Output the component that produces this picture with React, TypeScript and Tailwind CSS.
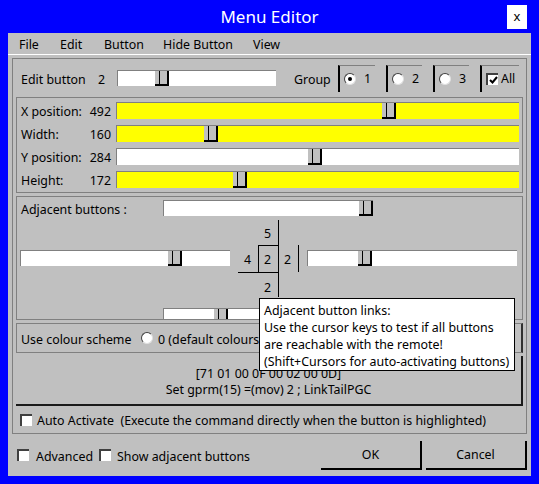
import React from 'react';

function Slider({ width, thumb, color = 'bg-white', className = '' }: { width: number; thumb: number; color?: string; className?: string }) {
  return (
    <div className={`relative h-[16px] shrink-0 border-t border-l border-[#808080] ${color} ${className}`} style={{ width }}>
      <div className="absolute top-0 bottom-0 w-[14px] bg-[#c0c0c0] border-r-2 border-b-2 border-black" style={{ left: thumb }}>
        <div className="absolute left-[4px] top-0 bottom-0 w-px bg-black" />
      </div>
    </div>
  );
}

function Radio({ checked = false }: { checked?: boolean }) {
  return (
    <div className="w-[12px] h-[12px] shrink-0 rounded-full bg-white border border-t-[#404040] border-l-[#404040] border-r-[#e0e0e0] border-b-[#e0e0e0] flex items-center justify-center">
      {checked && <div className="w-[4px] h-[4px] rounded-full bg-black" />}
    </div>
  );
}

function Check({ checked = false }: { checked?: boolean }) {
  return (
    <div className="w-[12px] h-[12px] shrink-0 bg-white border-t-2 border-l-2 border-[#404040] flex items-center justify-center">
      {checked && (
        <svg width="9" height="8" viewBox="0 0 9 8">
          <polyline points="1,4 3.5,6.5 8,1" fill="none" stroke="black" strokeWidth="2" />
        </svg>
      )}
    </div>
  );
}

function GroupFrame({ width, children }: { width: number; children: React.ReactNode }) {
  return (
    <div className="h-[27px] ml-[11px] first:ml-0 border-l-2 border-t border-l-black border-t-[#808080] flex items-center pl-[4px] gap-[8px]" style={{ width }}>
      {children}
    </div>
  );
}

const rows = [
  { label: 'X position:', value: 492, thumb: 265, color: 'bg-[#ffff00]' },
  { label: 'Width:', value: 160, thumb: 87, color: 'bg-[#ffff00]' },
  { label: 'Y position:', value: 284, thumb: 191, color: 'bg-white' },
  { label: 'Height:', value: 172, thumb: 116, color: 'bg-[#ffff00]' },
];

export default function App() {
  return (
    <div className="relative w-[539px] h-[484px] bg-[#0000ff] flex flex-col text-[12.4px] text-black font-['Noto_Sans',sans-serif] overflow-hidden">
      {/* Title bar */}
      <div className="h-[33px] shrink-0 flex items-center justify-center text-white text-[17px]">Menu Editor</div>
      <div className="absolute left-[507px] top-[5px] w-[20px] h-[24px] bg-white flex items-center justify-center text-[13px] text-black">x</div>

      {/* Window body */}
      <div className="mx-[8px] mb-[8px] flex-1 bg-[#c0c0c0] flex flex-col">
        {/* Menu */}
        <div className="h-[22px] shrink-0 flex items-center pt-[4px] border-b border-white">
          <span className="w-[41px] ml-[11px]">File</span>
          <span className="w-[44px]">Edit</span>
          <span className="w-[59px]">Button</span>
          <span className="w-[90px]">Hide Button</span>
          <span>View</span>
        </div>

        {/* Main frame */}
        <div className="mt-[3px] mx-[4px] h-[376px] border border-[#808080] flex flex-col">
          {/* Edit button row */}
          <div className="h-[38px] shrink-0 flex items-center pl-[8px]">
            <span className="w-[77px] relative top-[2px]">Edit button</span>
            <span className="w-[19px] relative top-[2px]">2</span>
            <Slider width={159} thumb={37} />
            <span className="ml-[18px] w-[44px] relative top-[2px]">Group</span>
            <div className="flex">
              <GroupFrame width={37}><Radio checked /><span className="relative top-[1px]">1</span></GroupFrame>
              <GroupFrame width={36}><Radio /><span className="relative top-[1px]">2</span></GroupFrame>
              <GroupFrame width={36}><Radio /><span className="relative top-[1px]">3</span></GroupFrame>
              <GroupFrame width={39}><Check checked /><span className="-ml-[5px] relative top-[1px]">All</span></GroupFrame>
            </div>
          </div>

          {/* Position group */}
          <div className="mx-[3px] h-[96px] shrink-0 border border-[#808080] pt-[4px] pl-[4px] pr-[3px] flex flex-col gap-[6px]">
            {rows.map((r) => (
              <div key={r.label} className="h-[17px] flex items-center">
                <span className="w-[68px] relative top-[2px]">{r.label}</span>
                <span className="w-[22px] text-right relative top-[2px]">{r.value}</span>
                <div className="ml-[5px] flex-1 relative h-[17px] border-t border-l border-[#808080]">
                  <div className={`absolute inset-0 ${r.color}`} />
                  <div className="absolute top-0 bottom-0 w-[14px] bg-[#c0c0c0] border-r-2 border-b-2 border-black" style={{ left: r.thumb }}>
                    <div className="absolute left-[4px] top-0 bottom-0 w-px bg-black" />
                  </div>
                </div>
              </div>
            ))}
          </div>

          {/* Adjacent buttons group */}
          <div className="mt-[3px] mx-[3px] h-[124px] shrink-0 border border-[#808080] overflow-hidden flex flex-col">
            <div className="mt-[3px] h-[16px] flex items-center pl-[4px]">
              <span className="w-[142px] relative top-[2px]">Adjacent buttons :</span>
              <Slider width={210} thumb={195} />
            </div>
            <div className="mt-[1px] h-[81px] flex items-center">
              <Slider width={210} thumb={147} className="ml-[3px]" />
              <div className="relative w-[77px] h-[81px] shrink-0">
                <div className="absolute left-[48px] top-[3px] w-px h-[77px] bg-black" />
                <div className="absolute left-[28px] top-[28px] w-px h-[27px] bg-black" />
                <div className="absolute left-[28px] top-[28px] w-[20px] h-px bg-black" />
                <div className="absolute left-[8px] top-[55px] w-[40px] h-px bg-black" />
                <div className="absolute left-[68px] top-[28px] w-px h-[27px] bg-black" />
                <span className="absolute left-[34px] top-[9px] leading-[16px]">5</span>
                <span className="absolute left-[14px] top-[35px] leading-[16px]">4</span>
                <span className="absolute left-[34px] top-[35px] leading-[16px]">2</span>
                <span className="absolute left-[54px] top-[35px] leading-[16px]">2</span>
                <span className="absolute left-[34px] top-[63px] leading-[16px]">2</span>
              </div>
              <Slider width={210} thumb={50} />
            </div>
            <div className="mt-[10px] ml-[146px]">
              <Slider width={210} thumb={50} />
            </div>
          </div>

          {/* Colour scheme */}
          <div className="mt-[3px] mx-[3px] h-[30px] shrink-0 border border-[#808080] border-r-2 border-r-[#303030] flex items-center pl-[4px]">
            <span className="w-[120px] relative top-[2px]">Use colour scheme</span>
            <Radio />
            <span className="ml-[5px] relative top-[2px]">0 (default colours)</span>
          </div>

          {/* Command button */}
          <div className="mt-[3px] mx-[3px] h-[50px] shrink-0 border-b-2 border-r-2 border-[#1a1a1a] flex flex-col items-center justify-center pt-[3px] leading-[16px]">
            <span>[71 01 00 0F 00 02 00 0D]</span>
            <span>Set gprm(15) =(mov) 2 ; LinkTailPGC</span>
          </div>

          {/* Auto activate */}
          <div className="flex-1 flex items-center pl-[7px]">
            <Check />
            <span className="ml-[5px] relative top-[2px]">Auto Activate&nbsp; (Execute the command directly when the button is highlighted)</span>
          </div>
        </div>

        {/* Bottom row */}
        <div className="h-[42px] shrink-0 flex items-center pl-[9px] pr-[4px]">
          <Check />
          <span className="ml-[7px] w-[63px] relative top-[2px]">Advanced</span>
          <Check />
          <span className="ml-[6px] relative top-[2px]">Show adjacent buttons</span>
          <div className="ml-auto flex gap-[4px]">
            <div className="w-[101px] h-[29px] border-r-2 border-b-2 border-black flex items-center justify-center pt-[2px]">OK</div>
            <div className="w-[101px] h-[29px] border-r-2 border-b-2 border-black flex items-center justify-center pt-[2px]">Cancel</div>
          </div>
        </div>
      </div>

      {/* Tooltip */}
      <div className="absolute left-[259px] top-[298px] w-[256px] h-[73px] bg-white border border-black px-[4px] pt-[3px] leading-[17px]">
        <div>Adjacent button links:</div>
        <div>Use the cursor keys to test if all buttons</div>
        <div>are reachable with the remote!</div>
        <div>(Shift+Cursors for auto-activating buttons)</div>
      </div>
    </div>
  );
}
